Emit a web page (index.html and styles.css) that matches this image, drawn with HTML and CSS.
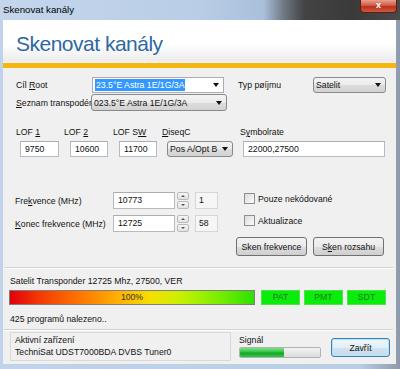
FILE: index.html
```html
<!DOCTYPE html>
<html lang="cs">
<head>
    <meta charset="UTF-8">
    <title>Skenovat kanály</title>
    <link rel="stylesheet" href="styles.css">
</head>
<body>
<div class="window">
    <div class="titlebar">
        <span class="caption">Skenovat kanály</span>
        <span class="close-box">x</span>
    </div>

    <div class="client">
        <div class="banner">
            <h1 class="banner-title">Skenovat kanály</h1>
        </div>
        <div class="accent"></div>

        <!-- satellite + receive type -->
        <div class="row row-root">
            <label class="lbl lbl-root">Cíl <u>R</u>oot</label>
            <div class="combo combo-edit combo-root">
                <span class="sel">23.5°E Astra 1E/1G/3A</span>
                <span class="arrow"></span>
            </div>
            <label class="lbl lbl-type">Typ pøí<u>j</u>mu</label>
            <div class="combo combo-drop combo-type">
                <span>Satelit</span>
                <span class="arrow"></span>
            </div>
        </div>

        <div class="row row-list">
            <label class="lbl lbl-list"><u>S</u>eznam transpodér</label>
            <div class="combo combo-drop combo-list">
                <span>023.5°E Astra 1E/1G/3A</span>
                <span class="arrow"></span>
            </div>
        </div>

        <!-- LNB settings -->
        <div class="lof">
            <div class="lof-col col-1">
                <label>LOF <u>1</u></label>
                <div class="field">9750</div>
            </div>
            <div class="lof-col col-2">
                <label>LOF <u>2</u></label>
                <div class="field">10600</div>
            </div>
            <div class="lof-col col-3">
                <label>LOF S<u>W</u></label>
                <div class="field">11700</div>
            </div>
            <div class="lof-col col-4">
                <label><u>D</u>iseqC</label>
                <div class="combo combo-drop">
                    <span>Pos A/Opt B</span>
                    <span class="arrow"></span>
                </div>
            </div>
            <div class="lof-col col-5">
                <label>S<u>y</u>mbolrate</label>
                <div class="field">22000,27500</div>
            </div>
        </div>

        <!-- frequency range -->
        <div class="freq">
            <div class="freq-left">
                <div class="freq-row">
                    <label class="freq-label">Fre<u>k</u>vence (MHz)</label>
                    <div class="field freq-input">10773</div>
                    <div class="spin"><span class="spin-up"></span><span class="spin-down"></span></div>
                    <div class="count">1</div>
                </div>
                <div class="freq-row second">
                    <label class="freq-label"><u>K</u>onec frekvence (MHz)</label>
                    <div class="field freq-input">12725</div>
                    <div class="spin"><span class="spin-up"></span><span class="spin-down"></span></div>
                    <div class="count">58</div>
                </div>
            </div>
            <div class="checks">
                <div class="check-row"><span class="checkbox"></span>Pouze nekódované</div>
                <div class="check-row second"><span class="checkbox"></span>Aktualizace</div>
            </div>
        </div>

        <div class="actions">
            <button class="btn">Sken frekvence</button>
            <button class="btn">S<u>k</u>en rozsahu</button>
        </div>

        <div class="divider"></div>

        <div class="status">Satelit Transponder 12725 Mhz, 27500, VER</div>
        <div class="progress-row">
            <div class="scan-bar">100%</div>
            <div class="flag">PAT</div>
            <div class="flag">PMT</div>
            <div class="flag">SDT</div>
        </div>
        <div class="found">425 programů nalezeno..</div>

        <div class="divider second"></div>

        <div class="footer">
            <div class="device">
                <div>Aktivní zařízení</div>
                <div>TechniSat UDST7000BDA DVBS Tuner0</div>
            </div>
            <div class="signal">
                <div class="signal-label">Signál</div>
                <div class="signal-bar"><div class="signal-fill" style="width: 55%"></div></div>
            </div>
            <button class="btn btn-close">Zavřít</button>
        </div>
    </div>
</div>
</body>
</html>
```

FILE: styles.css
```css
body {
    margin: 0;
    font-family: "Liberation Sans", Arial, sans-serif;
    font-size: 8.7px;
    color: #111;
}

u {
    text-decoration: underline;
}

.window {
    width: 400px;
    height: 369px;
    background: linear-gradient(to right, #c0d3ea 0%, #b9cde5 90%, #8d9aab 100%);
    display: flex;
    flex-direction: column;
    overflow: hidden;
}

/* title bar */
.titlebar {
    height: 20px;
    display: flex;
    background: linear-gradient(to right, #c3d6ec 0%, #b9cde6 50%, #a9bfda 66%, #6e7782 71%, #444 76%, #3a3a3a 88%, #4a4a4a 100%);
}

.caption {
    padding-left: 3px;
    line-height: 19px;
    font-size: 9.7px;
    color: #000;
}

.close-box {
    margin-left: auto;
    margin-right: 3px;
    width: 37px;
    height: 13px;
    box-sizing: border-box;
    border: 1px solid #5b1e14;
    border-top: none;
    border-radius: 0 0 4px 4px;
    background: linear-gradient(#e6a18e 0%, #d35a43 45%, #b8311f 55%, #cf5a3e 100%);
    color: #fff;
    font-weight: bold;
    font-size: 9px;
    text-align: center;
    line-height: 11px;
}

/* client area */
.client {
    margin: 0 4px 0 3px;
    height: 344px;
    background: #f0f0f0;
    overflow: hidden;
}

.banner {
    height: 43px;
    box-sizing: border-box;
    padding: 12px 0 0 13px;
    background: linear-gradient(#ffffff 0%, #ffffff 55%, #ececec 96%, #f6f6f6 100%);
}

.banner-title {
    margin: 0;
    font-size: 21px;
    font-weight: normal;
    line-height: 24px;
    color: #2d68a2;
    letter-spacing: -0.5px;
}

.accent {
    height: 5px;
    background: #f5b70f;
}

/* generic rows */
.row {
    display: flex;
    align-items: center;
    padding-left: 13px;
}

.row-root {
    margin-top: 8px;
    height: 17px;
}

.row-list {
    margin-top: 1px;
    height: 17px;
}

.lbl-root { width: 76px; }
.lbl-type { width: 75px; margin-left: 14px; }
.lbl-list { width: 75px; white-space: nowrap; }

.combo {
    height: 16px;
    box-sizing: border-box;
    display: flex;
    align-items: center;
    justify-content: space-between;
    padding: 0 4px 0 2px;
    white-space: nowrap;
}

.combo-edit {
    background: #fff;
    border: 1px solid #abadb3;
}

.combo-drop {
    border: 1px solid #8a8a8a;
    border-radius: 3px;
    background: linear-gradient(#f3f3f3 0%, #ebebeb 50%, #dddddd 51%, #d2d2d2 100%);
}

.combo-root { width: 132px; }
.combo-type { width: 73px; }
.combo-list { width: 136px; height: 17px; }

.sel {
    background: #3399ff;
    color: #fff;
    padding: 0 1px;
    line-height: 12px;
}

.arrow {
    width: 0;
    height: 0;
    border-left: 3.5px solid transparent;
    border-right: 3.5px solid transparent;
    border-top: 4px solid #111;
}

.field {
    height: 16px;
    box-sizing: border-box;
    background: #fff;
    border: 1px solid #b7bac1;
    border-top-color: #abadb3;
    padding-left: 4px;
    line-height: 14px;
}

/* LOF block */
.lof {
    display: flex;
    margin-top: 16px;
    padding-left: 13px;
}

.lof-col {
    display: flex;
    flex-direction: column;
}

.lof-col label {
    height: 11px;
    line-height: 11px;
}

.lof-col .field,
.lof-col .combo {
    margin-top: 3px;
}

.col-1 { width: 48px; }
.col-2 { width: 49px; }
.col-3 { width: 49px; }
.col-4 { width: 78px; }
.col-5 { width: 146px; }

.col-1 .field { margin-left: 4px; width: 39px; }
.col-2 .field { margin-left: 6px; width: 38px; }
.col-3 .field { margin-left: 6px; width: 38px; }
.col-4 .combo { margin-left: 5px; width: 66px; }
.col-5 .field { margin-left: 3px; width: 142px; }

/* frequency */
.freq {
    display: flex;
    margin-top: 35px;
}

.freq-left {
    padding-left: 12px;
}

.freq-row {
    display: flex;
    align-items: center;
    height: 17px;
}

.freq-row.second {
    margin-top: 6px;
}

.freq-label {
    width: 98px;
    white-space: nowrap;
}

.freq-input {
    width: 62px;
    height: 17px;
    line-height: 15px;
}

.spin {
    margin-left: 2px;
    width: 12px;
    height: 17px;
    display: flex;
    flex-direction: column;
    justify-content: space-between;
}

.spin span {
    height: 8px;
    box-sizing: border-box;
    border: 1px solid #b9b9b9;
    border-radius: 2px;
    background: linear-gradient(#f6f6f6, #e2e2e2);
    display: flex;
    align-items: center;
    justify-content: center;
}

.spin-up::after {
    content: "";
    border-left: 2px solid transparent;
    border-right: 2px solid transparent;
    border-bottom: 2px solid #555;
}

.spin-down::after {
    content: "";
    border-left: 2px solid transparent;
    border-right: 2px solid transparent;
    border-top: 2px solid #555;
}

.count {
    margin-left: 6px;
    width: 23px;
    height: 17px;
    box-sizing: border-box;
    border: 1px solid #d6d6d6;
    background: #f6f6f6;
    padding-left: 3px;
    line-height: 15px;
}

.checks {
    margin-left: 26px;
}

.check-row {
    display: flex;
    align-items: center;
    height: 13px;
    white-space: nowrap;
}

.check-row.second {
    margin-top: 9px;
}

.checkbox {
    width: 11px;
    height: 11px;
    box-sizing: border-box;
    border: 1px solid #8e8f8f;
    background: linear-gradient(135deg, #dcdcdc, #fbfbfb);
    margin-right: 3px;
}

/* buttons */
.actions {
    display: flex;
    justify-content: flex-end;
    gap: 6px;
    padding-right: 12px;
    margin-top: 5px;
}

.btn {
    width: 71px;
    height: 19px;
    padding: 0;
    font-family: inherit;
    font-size: inherit;
    color: #111;
    border: 1px solid #707070;
    border-radius: 3px;
    background: linear-gradient(#f2f2f2 0%, #ebebeb 50%, #dddddd 51%, #cfcfcf 100%);
}

.divider {
    margin: 11px 3px 0 1px;
    height: 1px;
    background: #d3d3d3;
    border-bottom: 1px solid #fff;
}

.divider.second {
    margin-top: 4px;
}

/* scan status */
.status {
    padding-left: 7px;
    margin-top: 7px;
    line-height: 11px;
}

.progress-row {
    display: flex;
    gap: 4px;
    margin-top: 3px;
    padding-left: 6px;
}

.scan-bar {
    width: 246px;
    height: 15px;
    box-sizing: border-box;
    border: 1px solid #7e7e7e;
    margin-right: 2px;
    background: linear-gradient(to right, #e3000c 0%, #f23a05 12%, #ff7a00 30%, #ffb300 45%, #f4e000 58%, #c8f000 70%, #7cee00 85%, #2de200 100%);
    text-align: center;
    line-height: 13px;
    color: #333;
}

.flag {
    width: 39px;
    height: 15px;
    box-sizing: border-box;
    border: 1px solid #4ee04e;
    background: #0aec0a;
    color: #1d7a1d;
    text-align: center;
    line-height: 13px;
}

.found {
    padding-left: 7px;
    margin-top: 9px;
    line-height: 11px;
}

/* footer */
.footer {
    display: flex;
    margin-top: 1px;
    padding-left: 7px;
}

.device {
    width: 221px;
    height: 29px;
    box-sizing: border-box;
    border: 1px solid #d9d9d9;
    padding: 1px 0 0 4px;
    line-height: 12px;
}

.signal {
    margin-left: 8px;
    width: 82px;
}

.signal-label {
    line-height: 12px;
    padding-top: 2px;
}

.signal-bar {
    margin-top: 1px;
    height: 11px;
    box-sizing: border-box;
    border: 1px solid #b2b2b2;
    border-radius: 2px;
    background: linear-gradient(#f3f3f3, #dcdcdc);
    overflow: hidden;
}

.signal-fill {
    height: 100%;
    background: linear-gradient(#7fe08a 0%, #2ec43f 45%, #0fa625 55%, #37c24b 100%);
}

.btn-close {
    margin-left: 10px;
    margin-top: 6px;
    width: 59px;
    border-color: #3c7fb1;
    box-shadow: inset 0 0 0 1px #b8e2f7;
    background: linear-gradient(#eef6fb 0%, #e2eef6 50%, #d2e3ee 51%, #c6dbe9 100%);
}
```
